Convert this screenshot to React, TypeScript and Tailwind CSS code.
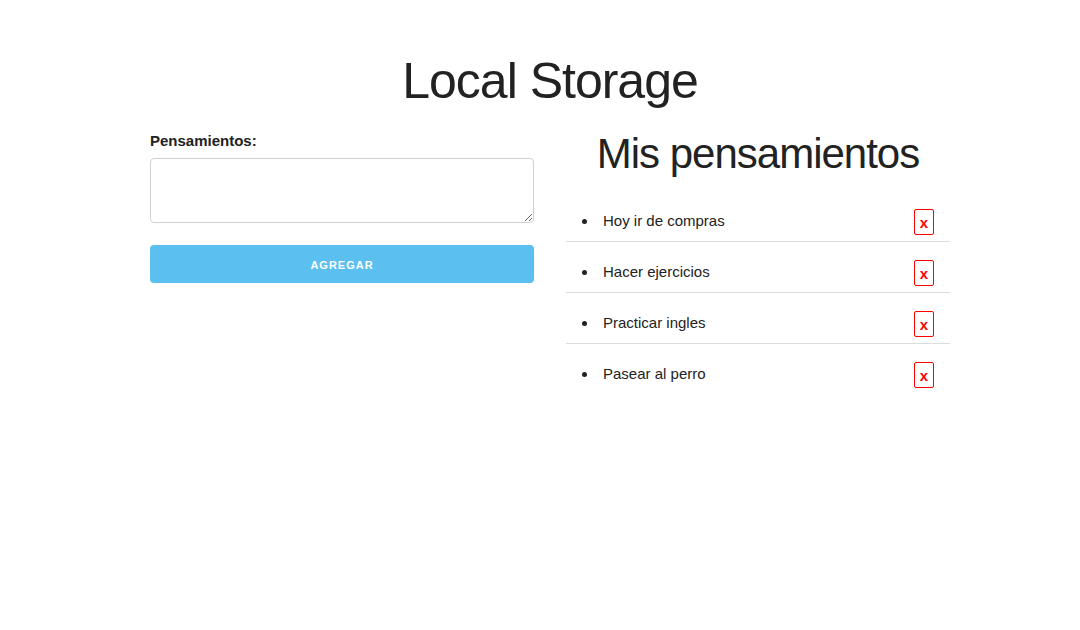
const items = ['Hoy ir de compras', 'Hacer ejercicios', 'Practicar ingles', 'Pasear al perro'];

export default function App() {
  return (
    <div className="min-h-screen bg-white text-[#222] font-['Liberation_Sans',Arial,sans-serif]">
      <div className="w-[800px] ml-[150px] pt-[51px]">
        <h1 className="text-center text-[50px] leading-[60px] tracking-[-1px]">Local Storage</h1>

        <div className="flex gap-[32px] mt-[17px]">
          {/* form */}
          <div className="w-[384px] pt-[1px]">
            <label className="block text-[15px] leading-[24px] font-bold">Pensamientos:</label>
            <textarea className="block w-full h-[65px] mt-[5px] px-[10px] py-[6px] border border-[#d1d1d1] rounded-[4px] text-[15px] outline-none" />
            <button className="block w-full h-[38px] mt-[22px] pt-[2px] rounded-[4px] bg-[#5bc0ef] text-white text-[11px] font-bold tracking-[1px] uppercase">
              Agregar
            </button>
          </div>

          {/* lista */}
          <div className="w-[384px]">
            <h2 className="text-center text-[42px] leading-[52px] tracking-[-1px]">Mis pensamientos</h2>
            <ul className="mt-[21px]">
              {items.map((item, i) => (
                <li
                  key={item}
                  className={
                    'flex items-center h-[40px] mt-[10px] pl-[16px] pr-[16px] text-[15px] ' +
                    (i < items.length - 1 ? 'border-b border-[#dcdcdc] box-content' : '')
                  }
                >
                  <span className="w-[5px] h-[5px] rounded-full bg-[#222] mr-[16px]" />
                  <span className="flex-1">{item}</span>
                  <button className="w-[20px] h-[26px] mt-[2px] pt-[2px] border border-[#ff0000] rounded-[2px] text-[#ff0000] font-bold text-[15px] leading-[20px]">
                    x
                  </button>
                </li>
              ))}
            </ul>
          </div>
        </div>
      </div>
    </div>
  );
}
